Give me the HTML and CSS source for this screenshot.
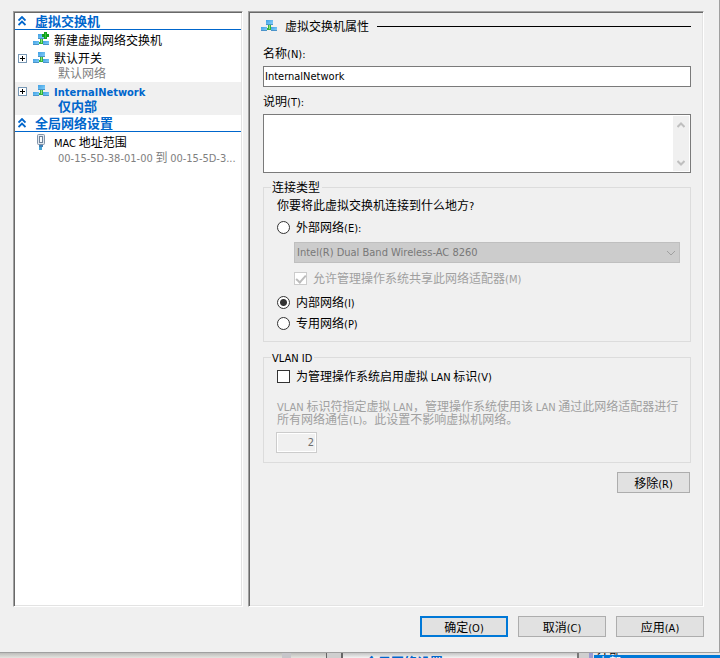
FILE: index.html
```html
<!DOCTYPE html>
<html lang="zh-CN">
<head>
<meta charset="utf-8">
<title>虚拟交换机管理器</title>
<link rel="stylesheet" href="styles.css">
</head>
<body>
<svg class="defs" aria-hidden="true">
  <defs>
    <linearGradient id="pc" x1="0" y1="0" x2="1" y2="1">
      <stop offset="0" stop-color="#3f9fe4"/><stop offset="1" stop-color="#8ad4fb"/>
    </linearGradient>
    <symbol id="switch" viewBox="0 0 16 16">
      <path d="M7 7h3v3h2v2H5v-2h2z" fill="#35b23c"/>
      <path d="M8 7h1v4h-1z" fill="#8be07c"/>
      <rect x="5" y="2" width="7" height="5" fill="url(#pc)"/>
      <path d="M5 6h7v1H5z" fill="#4a93c9"/>
      <rect x="0" y="9" width="6" height="4" fill="url(#pc)"/>
      <path d="M0 12h6v1H0z" fill="#4a93c9"/>
      <rect x="10" y="9" width="6" height="4" fill="url(#pc)"/>
      <path d="M10 12h6v1h-6z" fill="#4a93c9"/>
    </symbol>
    <symbol id="chevrons" viewBox="0 0 8 10">
      <path d="M0.500 4.500 4 1 7.500 4.500M0.500 9 4 5.500 7.500 9" fill="none" stroke="#0066cc" stroke-width="1.800"/>
    </symbol>
  </defs>
</svg>

<main class="dialog">
  <div class="panes">
    <nav class="pane tree">
      <button class="section" type="button" aria-expanded="true"><svg class="chev"><use href="#chevrons"/></svg>虚拟交换机</button>
      <ul class="items">
        <li class="item">
          <svg class="icon" viewBox="0 0 16 16"><use href="#switch"/><path d="M11 0h3v2h2v3h-2v2h-3V5H9V2h2z" fill="#14a01c"/><path d="M12 1h1v5h-1z" fill="#35c23a"/></svg>
          <span class="name">新建虚拟网络交换机</span>
        </li>
        <li class="item">
          <button class="expander" type="button" aria-label="展开"></button>
          <svg class="icon"><use href="#switch"/></svg>
          <span class="name">默认开关</span>
          <span class="sub">默认网络</span>
        </li>
        <li class="item selected">
          <button class="expander" type="button" aria-label="展开"></button>
          <svg class="icon"><use href="#switch"/></svg>
          <span class="name"><span class="latin">InternalNetwork</span></span>
          <span class="sub">仅内部</span>
        </li>
      </ul>
      <button class="section" type="button" aria-expanded="true"><svg class="chev"><use href="#chevrons"/></svg>全局网络设置</button>
      <ul class="items">
        <li class="item">
          <svg class="icon" viewBox="0 0 16 16"><rect x="4.500" y="0.500" width="7" height="10" rx="1" fill="#dfe6ee" stroke="#8193a8"/><rect x="6.500" y="2.500" width="3" height="6" fill="#f7fafc" stroke="#6f8297"/><path d="M6 11h4v2H6z" fill="#3f7fb5"/><path d="M6 13h3v3H6z" fill="#45a5d8"/></svg>
          <span class="name"><span class="latin">MAC</span> 地址范围</span>
          <span class="sub"><span class="latin">00-15-5D-38-01-00</span> 到 <span class="latin">00-15-5D-3...</span></span>
        </li>
      </ul>
    </nav>

    <form class="pane props" id="props">
      <h1 class="title"><svg class="icon"><use href="#switch"/></svg>虚拟交换机属性</h1>

      <label class="caption" for="name">名称<span class="latin">(N):</span></label>
      <input class="field" id="name" type="text" value="InternalNetwork">

      <label class="caption" for="notes">说明<span class="latin">(T):</span></label>
      <div class="notes">
        <textarea id="notes"></textarea>
        <div class="scroll" aria-hidden="true">
          <svg viewBox="0 0 8 6"><path d="M0.500 5 4 1.500 7.500 5"/></svg>
          <svg viewBox="0 0 8 6"><path d="M0.500 1 4 4.500 7.500 1"/></svg>
        </div>
      </div>

      <fieldset class="group connection">
        <legend>连接类型</legend>
        <p class="question">你要将此虚拟交换机连接到什么地方<span class="latin">?</span></p>
        <label class="choice"><input type="radio" name="net"><span>外部网络<span class="latin">(E):</span></span></label>
        <div class="external">
          <div class="adapter">
            <select disabled aria-label="网络适配器"><option>Intel(R) Dual Band Wireless-AC 8260</option></select>
            <svg viewBox="0 0 10 6" aria-hidden="true"><path d="M1 1l4 4 4-4"/></svg>
          </div>
          <label class="choice disabled"><input type="checkbox" checked disabled><span>允许管理操作系统共享此网络适配器<span class="latin">(M)</span></span></label>
        </div>
        <label class="choice"><input type="radio" name="net" checked><span>内部网络<span class="latin">(I)</span></span></label>
        <label class="choice"><input type="radio" name="net"><span>专用网络<span class="latin">(P)</span></span></label>
      </fieldset>

      <fieldset class="group vlan">
        <legend><span class="latin">VLAN ID</span></legend>
        <label class="choice"><input type="checkbox"><span>为管理操作系统启用虚拟 <span class="latin">LAN</span> 标识<span class="latin">(V)</span></span></label>
        <label class="hint" for="vlan"><span class="latin">VLAN</span> 标识符指定虚拟 <span class="latin">LAN</span>，管理操作系统使用该 <span class="latin">LAN</span> 通过此网络适配器进行所有网络通信<span class="latin">(L)</span>。此设置不影响虚拟机网络。</label>
        <input class="vlan-id" id="vlan" type="text" value="2" disabled>
      </fieldset>

      <button class="btn remove" type="button">移除<span class="latin">(R)</span></button>
    </form>
  </div>

  <footer class="actions">
    <button class="btn primary" type="submit" form="props">确定<span class="latin">(O)</span></button>
    <button class="btn" type="button">取消<span class="latin">(C)</span></button>
    <button class="btn" type="button">应用<span class="latin">(A)</span></button>
  </footer>
</main>

<div class="behind" aria-hidden="true">
  <div class="b-left"></div>
  <div class="b-bar"></div>
  <div class="b-gap"></div>
  <div class="b-edge"></div>
  <div class="b-tree">全局网络设置</div>
  <div class="b-split"></div>
  <div class="b-list"><span>外部</span><div class="b-row">内部</div></div>
</div>
</body>
</html>
```

FILE: styles.css
```css
* { box-sizing: border-box; }

body {
  margin: 0;
  height: 100vh;
  display: flex;
  flex-direction: column;
  overflow: hidden;
  background: #e4e4e0;
  color: #000;
  font: 12px/14px "Noto Sans CJK SC", sans-serif;
}

button, input, select, textarea { font: inherit; color: inherit; margin: 0; }
ul, p, h1 { margin: 0; padding: 0; }
svg { display: block; }
.defs { position: absolute; width: 0; height: 0; }

.latin, .field, .adapter select, .vlan-id {
  font-family: "DejaVu Sans Condensed", "DejaVu Sans", sans-serif;
  font-size: 11px;
}
.latin { line-height: 0; }

.dialog {
  flex: 1;
  min-height: 0;
  display: flex;
  flex-direction: column;
  gap: 9px;
  padding: 11px 15px 15px 13px;
  background: #f0f0f0;
  border: solid #a0a0a0;
  border-width: 0 1px 1px 0;
}

.panes {
  flex: 1;
  min-height: 0;
  display: grid;
  grid-template-columns: 230px 1fr;
  gap: 5px;
}

.pane {
  border: 1px solid;
  border-color: #a0a0a0 #fff #fff #a0a0a0;
  box-shadow: inset 1px 1px #696969, inset -1px -1px #e3e3e3;
}

/* Tree */
.tree { padding: 1px; background: #fff; }
.items { list-style: none; margin-top: 1px; }

.section {
  display: flex;
  align-items: center;
  width: 100%;
  height: 17px;
  padding: 0 0 0 3px;
  gap: 9px;
  border: 0;
  border-bottom: 1px solid #0066cc;
  background: none;
  color: #0066cc;
  font-size: 13px;
  font-weight: bold;
}
.chev { width: 8px; height: 10px; }

.item {
  display: grid;
  grid-template-columns: 15px 21px 1fr;
  grid-template-rows: 18px;
  grid-auto-rows: 15px;
  align-items: center;
  padding-left: 3px;
  white-space: nowrap;
}
.expander {
  grid-column: 1;
  width: 9px;
  height: 9px;
  padding: 0;
  border: 1px solid #7898b5;
  background:
    linear-gradient(#000, #000) center / 5px 1px no-repeat,
    linear-gradient(#000, #000) center / 1px 5px no-repeat,
    #fff;
}
.icon { width: 16px; height: 16px; flex: none; }
.item .icon { grid-column: 2; grid-row: 1; }
.name { grid-column: 3; grid-row: 1; }
.sub {
  grid-column: 3;
  grid-row: 2;
  align-self: start;
  padding-left: 4px;
  line-height: 12px;
  color: #808080;
}
.selected { background: #f0f0f0; font-weight: bold; color: #0066cc; }
.selected .sub { color: inherit; font-size: 13px; }

/* Properties */
.props {
  display: flex;
  flex-direction: column;
  padding: 4px 12px 0 14px;
}
.title {
  display: flex;
  align-items: center;
  gap: 8px;
  height: 20px;
  margin: 0 0 10px -2px;
  font-size: 12px;
  font-weight: normal;
}
.title::after { content: ""; flex: 1; height: 1px; background: #000; }

.caption { align-self: flex-start; margin-bottom: 6px; }
.field {
  height: 21px;
  margin-bottom: 7px;
  padding: 0 1px;
  border: 1px solid #7a7a7a;
  background: #fff;
}
.notes {
  display: flex;
  height: 59px;
  margin-bottom: 7px;
  padding: 1px;
  border: 1px solid #7a7a7a;
  background: #fff;
}
.notes textarea { flex: 1; border: 0; padding: 1px; resize: none; background: none; overflow: hidden; }
.scroll {
  display: flex;
  flex-direction: column;
  justify-content: space-between;
  align-items: center;
  width: 16px;
  padding: 6px 0 5px;
  background: #f0f0f0;
}
.scroll svg { width: 8px; height: 6px; fill: none; stroke: #bfbfbf; stroke-width: 2; }

.group {
  display: flex;
  flex-direction: column;
  min-width: 0;
  margin: 0 0 8px;
  border: 1px solid #dcdcdc;
}
.group legend { height: 14px; margin-left: -6px; padding: 0 2px 0 1px; }
.connection { padding: 4px 10px 11px 13px; }
.vlan { padding: 5px 10px 9px 13px; }

.question { margin-bottom: 8px; }
.choice { display: flex; align-items: center; gap: 6px; height: 14px; align-self: flex-start; white-space: nowrap; }
.choice + .choice { margin-top: 7px; }
.choice input {
  appearance: none;
  width: 13px;
  height: 13px;
  border: 1px solid #333;
  background: #fff;
}
.choice input[type="radio"] { border-radius: 50%; }
.choice input[type="radio"]:checked { background: radial-gradient(circle, #333 3px, #fff 4px); }
.disabled { color: #a0a0a0; }
.choice input:disabled { position: relative; border-color: #ccc; }
.choice input:disabled:checked::after {
  content: "";
  position: absolute;
  left: 3px;
  top: 0;
  width: 4px;
  height: 8px;
  border: solid #bcbcbc;
  border-width: 0 2px 2px 0;
  transform: rotate(42deg);
}

.external { display: flex; flex-direction: column; gap: 8px; margin: 8px 0 10px 17px; }
.adapter { display: grid; align-items: center; }
.adapter > * { grid-area: 1 / 1; }
.adapter select {
  appearance: none;
  width: 100%;
  height: 21px;
  padding: 0 20px 0 2px;
  border: 1px solid #bfbfbf;
  border-radius: 0;
  background: #ccc;
  color: #787878;
  opacity: 1;
}
.adapter svg { justify-self: end; width: 10px; height: 6px; margin-right: 4px; fill: none; stroke: #a0a0a0; }

.hint { margin: 16px 0 7px; line-height: 13px; color: #a0a0a0; }
.vlan-id {
  width: 41px;
  height: 21px;
  margin-left: -1px;
  padding: 0 2px;
  border: 1px solid #ccc;
  background: #f0f0f0;
  box-shadow: inset 0 0 0 1px #fff;
  color: #6d6d6d;
  text-align: right;
}

.btn {
  width: 88px;
  height: 21px;
  padding: 0;
  border: 1px solid #adadad;
  background: #e1e1e1;
}
.remove { align-self: flex-end; width: 73px; margin: 1px 1px 0 0; }
.primary { border: 2px solid #0078d7; }
.actions { display: flex; justify-content: flex-end; gap: 10px; }

/* Window visible below the dialog */
.behind {
  display: flex;
  height: 5px;
  overflow: hidden;
  background: linear-gradient(#bdbdba, #e4e4e0);
}
.b-left { width: 282px; }
.b-bar { width: 9px; background: #c6c6ca; }
.b-gap { flex: 1; }
.b-edge { width: 17px; border: solid #666; border-width: 0 2px 0 1px; background: #cfcfcf; }
.b-tree {
  width: 234px;
  padding: 2px 0 0 22px;
  background: linear-gradient(#c4c4c4, #f4f4f4);
  color: #0066cc;
  font-size: 13px;
  font-weight: bold;
}
.b-split { width: 16px; border: solid #9a9ad0; border-width: 0 4px 0 0; box-shadow: inset 2px 0 #777; background: #cfcfcf; }
.b-list { width: 127px; padding-left: 1px; background: #e6e6e6; }
.b-list span { display: flex; align-items: flex-end; height: 2px; padding-left: 3px; line-height: 12px; }
.b-row { height: 3px; overflow: hidden; padding-left: 3px; background: #0078d7; color: #fff; line-height: 14px; }
```
